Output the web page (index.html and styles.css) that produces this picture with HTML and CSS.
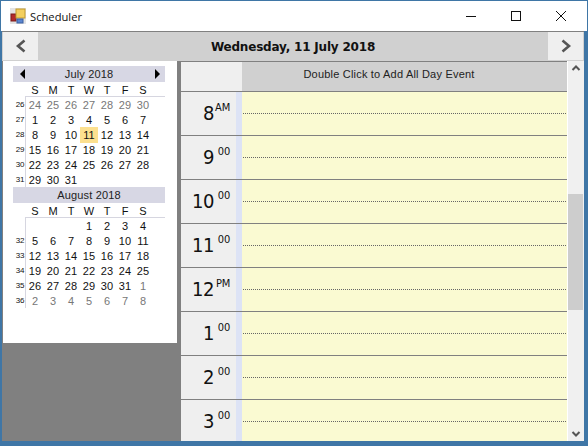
FILE: index.html
```html
<!DOCTYPE html>
<html lang="en">
<head>
<meta charset="utf-8">
<title>Scheduler</title>
<link rel="stylesheet" href="styles.css">
</head>
<body>
<div class="window">
  <header class="titlebar">
    <svg class="app-icon" width="16" height="16" viewBox="0 0 16 16">
      <rect x="0" y="0" width="16" height="16" fill="#e4e4e4"/>
      <rect x="1" y="6" width="5" height="7" fill="#b32a2a" stroke="#7a1c1c"/>
      <rect x="6" y="1" width="9" height="9" fill="#f3cf5e" stroke="#c09a30"/>
      <rect x="7" y="11" width="6" height="4" fill="#5b86d0" stroke="#3b5fa0"/>
    </svg>
    <span class="title">Scheduler</span>
    <div class="caption">
      <svg width="12" height="12" viewBox="0 0 12 12"><path d="M1 6.5H11" stroke="#111" fill="none"/></svg>
      <svg width="12" height="12" viewBox="0 0 12 12"><rect x="1.5" y="1.5" width="9" height="9" stroke="#111" fill="none"/></svg>
      <svg width="12" height="12" viewBox="0 0 12 12"><path d="M1 1L11 11M11 1L1 11" stroke="#111" fill="none"/></svg>
    </div>
  </header>
  <div class="client">
    <nav class="datebar">
      <button class="navbtn"><svg width="12" height="14" viewBox="0 0 12 14"><path d="M9.5 1.5L3 7L9.5 12.5" stroke="#555" stroke-width="2.6" fill="none"/></svg></button>
      <div class="date">Wednesday, 11 July 2018</div>
      <button class="navbtn"><svg width="12" height="14" viewBox="0 0 12 14"><path d="M2.5 1.5L9 7L2.5 12.5" stroke="#555" stroke-width="2.6" fill="none"/></svg></button>
    </nav>
    <main class="body">
      <aside class="sidebar">
        <div class="calendar">
          <div class="month-title"><span class="arrow-left"></span><span>July 2018</span><span class="arrow-right"></span></div>
          <div class="dow"><span>S</span><span>M</span><span>T</span><span>W</span><span>T</span><span>F</span><span>S</span></div>
          <div class="weeks">
            <div class="week"><b>26</b><i class="o">24</i><i class="o">25</i><i class="o">26</i><i class="o">27</i><i class="o">28</i><i class="o">29</i><i class="o">30</i></div>
            <div class="week"><b>27</b><i>1</i><i>2</i><i>3</i><i>4</i><i>5</i><i>6</i><i>7</i></div>
            <div class="week"><b>28</b><i>8</i><i>9</i><i>10</i><i class="today">11</i><i>12</i><i>13</i><i>14</i></div>
            <div class="week"><b>29</b><i>15</i><i>16</i><i>17</i><i>18</i><i>19</i><i>20</i><i>21</i></div>
            <div class="week"><b>30</b><i>22</i><i>23</i><i>24</i><i>25</i><i>26</i><i>27</i><i>28</i></div>
            <div class="week"><b>31</b><i>29</i><i>30</i><i>31</i></div>
          </div>
          <div class="month-title second"><span>August 2018</span></div>
          <div class="dow"><span>S</span><span>M</span><span>T</span><span>W</span><span>T</span><span>F</span><span>S</span></div>
          <div class="weeks">
            <div class="week"><b></b><i></i><i></i><i></i><i>1</i><i>2</i><i>3</i><i>4</i></div>
            <div class="week"><b>32</b><i>5</i><i>6</i><i>7</i><i>8</i><i>9</i><i>10</i><i>11</i></div>
            <div class="week"><b>33</b><i>12</i><i>13</i><i>14</i><i>15</i><i>16</i><i>17</i><i>18</i></div>
            <div class="week"><b>34</b><i>19</i><i>20</i><i>21</i><i>22</i><i>23</i><i>24</i><i>25</i></div>
            <div class="week"><b>35</b><i>26</i><i>27</i><i>28</i><i>29</i><i>30</i><i>31</i><i class="o">1</i></div>
            <div class="week"><b>36</b><i class="o">2</i><i class="o">3</i><i class="o">4</i><i class="o">5</i><i class="o">6</i><i class="o">7</i><i class="o">8</i></div>
          </div>
        </div>
      </aside>
      <section class="schedule">
        <div class="sched-head">
          <div class="corner"></div>
          <div class="allday">Double Click to Add All Day Event</div>
        </div>
        <div class="hours">
          <div class="hour"><div class="label"><span class="h">8</span><sup>AM</sup></div><div class="slot"></div></div>
          <div class="hour"><div class="label"><span class="h">9</span><sup>00</sup></div><div class="slot"></div></div>
          <div class="hour"><div class="label"><span class="h">10</span><sup>00</sup></div><div class="slot"></div></div>
          <div class="hour"><div class="label"><span class="h">11</span><sup>00</sup></div><div class="slot"></div></div>
          <div class="hour"><div class="label"><span class="h">12</span><sup>PM</sup></div><div class="slot"></div></div>
          <div class="hour"><div class="label"><span class="h">1</span><sup>00</sup></div><div class="slot"></div></div>
          <div class="hour"><div class="label"><span class="h">2</span><sup>00</sup></div><div class="slot"></div></div>
          <div class="hour last"><div class="label"><span class="h">3</span><sup>00</sup></div><div class="slot"></div></div>
        </div>
      </section>
      <div class="scrollbar">
        <svg width="10" height="8" viewBox="0 0 10 8"><path d="M1.5 6L5 2.5L8.5 6" stroke="#555" stroke-width="2" fill="none"/></svg>
        <div class="track"><div class="thumb"></div></div>
        <svg width="10" height="8" viewBox="0 0 10 8"><path d="M1.5 2L5 5.5L8.5 2" stroke="#555" stroke-width="2" fill="none"/></svg>
      </div>
    </main>
  </div>
</div>
</body>
</html>
```
FILE: styles.css
```css
* { box-sizing: border-box; }
html, body { margin: 0; padding: 0; }
body { width: 588px; height: 446px; overflow: hidden; font-family: "Liberation Sans", Arial, sans-serif; background: #fff; }
.window { width: 588px; height: 446px; display: flex; flex-direction: column; background: #3f76a6; border: 1px solid #3f76a6; }
.titlebar { height: 30px; flex: none; background: #fff; display: flex; align-items: center; padding-left: 9px; }
.app-icon { flex: none; }
.title { font-family: "Open Sans", sans-serif; font-size: 11.2px; margin-left: 4px; color: #111; }
.caption { margin-left: auto; display: flex; align-items: center; gap: 33px; padding-right: 20px; }
.client { flex: 1; min-height: 0; margin: 0 3px 4px 1px; background: #808080; display: flex; flex-direction: column; }
.datebar { height: 30px; flex: none; display: flex; background: #d0d0d0; border-top: 1px solid #808080; padding: 0 1px; }
.navbtn { width: 35px; height: 28px; padding: 0; border: 0; background: #efefef; display: flex; align-items: center; justify-content: center; }
.date { flex: 1; text-align: center; font: bold 12px/30px "DejaVu Sans", sans-serif; color: #111; letter-spacing: -0.2px; }
.body { flex: 1; min-height: 0; display: flex; padding-left: 1px; background: #808080; }
.sidebar { width: 174px; height: 282px; flex: none; background: #fff; padding: 5px 0 0 10px; margin-right: 4px; }
.month-title { width: 152px; height: 16px; background: #d7d7e4; display: flex; justify-content: center; align-items: center; font-size: 11px; color: #222; position: relative; letter-spacing: 0.15px; }
.arrow-left, .arrow-right { position: absolute; top: 3px; width: 0; height: 0; border-top: 5px solid transparent; border-bottom: 5px solid transparent; }
.arrow-left { left: 7px; border-right: 5px solid #000; }
.arrow-right { right: 5px; border-left: 5px solid #000; }
.dow { display: grid; grid-template-columns: repeat(7, 18px); width: 152px; padding-left: 13px; height: 14px; font-size: 11px; line-height: 16px; text-align: center; color: #111; }
.weeks { border-top: 1px solid #d6d6e0; margin-left: 12px; width: 140px; }
.week { display: grid; grid-template-columns: repeat(7, 18px); height: 15px; position: relative; border-left: 1px solid #d6d6e0; font-size: 11px; line-height: 16px; text-align: center; color: #111; }
.week b { position: absolute; left: -11px; top: 0; width: 10px; font-weight: normal; font-size: 8px; text-align: center; letter-spacing: -0.3px; }
.week i { font-style: normal; letter-spacing: 0.1px; }
.week i.o { color: #777; }
.week i.today { background: #fce08f; }
.schedule { flex: 1; min-width: 0; display: flex; flex-direction: column; border-top: 1px solid #808080; background: #fafad2; }
.sched-head { height: 29px; flex: none; display: flex; }
.corner { width: 61px; background: #efefef; }
.allday { flex: 1; background: #d0d0d0; text-align: center; font-size: 11px; line-height: 25px; color: #222; padding-right: 31px; letter-spacing: 0.2px; }
.hours { flex: 1; min-height: 0; overflow: hidden; }
.hour { height: 44px; display: flex; border-top: 1px solid #808080; }
.label { width: 61px; flex: none; background: #efefef; border-right: 6px solid #dde3f5; display: flex; justify-content: flex-end; align-items: flex-start; padding-right: 6px; padding-top: 5px; color: #111; }
.h { font: 20px/32px "DejaVu Sans Condensed", "DejaVu Sans", sans-serif; letter-spacing: -0.5px; }
sup { font: 11px/14px "DejaVu Sans Condensed", "DejaVu Sans", sans-serif; width: 16px; text-align: right; padding-top: 4px; letter-spacing: -0.2px; }
.slot { flex: 1; height: 22px; border-bottom: 1px dotted #666; margin: 0 1px; }
.scrollbar { width: 17px; flex: none; background: #f0f0f0; border-left: 1px solid #fff; display: flex; flex-direction: column; align-items: center; justify-content: space-between; padding: 3px 0; }
.track { flex: 1; width: 100%; padding-top: 122px; }
.thumb { height: 116px; width: 15px; background: #cdcdcd; }
```
